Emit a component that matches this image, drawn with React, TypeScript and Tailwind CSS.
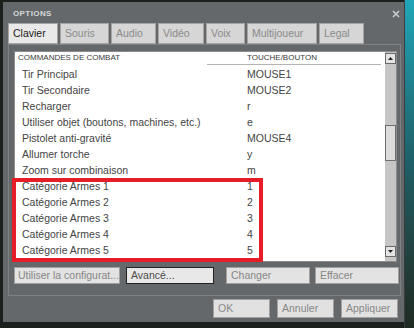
import React from 'react';

const tabs = [
  { label: 'Clavier', w: 'w-[50px]', active: true },
  { label: 'Souris', w: 'w-[49px]' },
  { label: 'Audio', w: 'w-[45px]' },
  { label: 'Vidéo', w: 'w-[46px]' },
  { label: 'Voix', w: 'w-[39px]' },
  { label: 'Multijoueur', w: 'w-[70px]' },
  { label: 'Legal', w: 'w-[45px]' },
];

const bindings: [string, string][] = [
  ['Tir Principal', 'MOUSE1'],
  ['Tir Secondaire', 'MOUSE2'],
  ['Recharger', 'r'],
  ['Utiliser objet (boutons, machines, etc.)', 'e'],
  ['Pistolet anti-gravité', 'MOUSE4'],
  ['Allumer torche', 'y'],
  ['Zoom sur combinaison', 'm'],
  ['Catégorie Armes 1', '1'],
  ['Catégorie Armes 2', '2'],
  ['Catégorie Armes 3', '3'],
  ['Catégorie Armes 4', '4'],
  ['Catégorie Armes 5', '5'],
];

function ScrollArrow({ up }: { up?: boolean }) {
  return (
    <div className="h-[11px] w-[11px] bg-[#e4e4e4] border border-[#6a6a6a] flex items-center justify-center">
      <svg width="5" height="3" viewBox="0 0 5 3">
        {up ? <polygon points="0,3 5,3 2.5,0" fill="#222" /> : <polygon points="0,0 5,0 2.5,3" fill="#222" />}
      </svg>
    </div>
  );
}

export default function App() {
  return (
    <div className="w-[414px] h-[328px] bg-[#1b201c] flex overflow-hidden font-['Liberation_Sans',Arial,sans-serif] text-[10.5px]">
      <div className="ml-[3px] mt-[2px] w-[401px] h-[320px] bg-[#65686a] flex flex-col">
        {/* Title */}
        <div className="h-[21px] flex items-center justify-between pl-[10px] pr-[4px] pt-[3px]">
          <span className="text-[8px] font-bold tracking-[0.4px] text-[#d6d8da]">OPTIONS</span>
          <svg width="8" height="8" viewBox="0 0 8 8">
            <path d="M1 1 L7 7 M7 1 L1 7" stroke="#c9cbcd" strokeWidth="1.6" />
          </svg>
        </div>

        {/* Tabs */}
        <div className="h-[21px] ml-[5px] flex gap-[2px]">
          {tabs.map((t) => (
            <div
              key={t.label}
              className={`${t.w} h-full flex items-center pl-[4px] border border-[#a4a4a4] ${
                t.active ? 'bg-[#e9e9e9] text-[#1a1a1a]' : 'bg-[#d6d6d6] text-[#8a8a8a]'
              }`}
            >
              {t.label}
            </div>
          ))}
        </div>

        {/* Panel */}
        <div className="ml-[5px] w-[393px] border border-[#7e8183] pl-[5px] pr-[1px] pt-[6px] pb-[11px] flex flex-col">
          <div className="relative w-[383px] h-[211px] bg-white border border-[#8c8c8c] flex">
            <div className="flex-1 flex flex-col">
              <div className="h-[12px] flex items-center text-[8px] text-[#3a3a3a]">
                <span className="pl-[3px] w-[232px]">COMMANDES DE COMBAT</span>
                <span>TOUCHE/BOUTON</span>
              </div>
              <div className="h-px ml-[192px] mr-[4px] bg-[#b4b4b4]" />
              <div className="mt-[2px] flex flex-col">
                {bindings.map(([label, key]) => (
                  <div key={label} className="h-[16px] flex items-center text-[#444]">
                    <span className="pl-[7px] w-[232px]">{label}</span>
                    <span>{key}</span>
                  </div>
                ))}
              </div>
            </div>
            <div className="w-[11px] bg-[#c6c6c6] flex flex-col pt-[1px] pb-[4px]">
              <ScrollArrow up />
              <div className="mt-[61px] h-[36px] bg-[#dcdcdc] border border-[#6e6e6e]" />
              <div className="flex-1" />
              <ScrollArrow />
            </div>
            <div className="absolute left-[-3px] top-[126px] w-[251px] h-[84px] border-[4px] border-[#e51d26]" />
          </div>

          <div className="mt-[5px] h-[17px] flex">
            <div className="w-[106px] bg-[#e3e3e3] border border-[#a0a0a0] text-[#868686] flex items-center pl-[3px]">
              Utiliser la configurat...
            </div>
            <div className="ml-[6px] w-[88px] bg-[#e8e8e8] border border-[#222] text-[#4a4a4a] flex items-center pl-[4px]">
              Avancé...
            </div>
            <div className="ml-[12px] w-[84px] bg-[#e3e3e3] border border-[#a0a0a0] text-[#868686] flex items-center pl-[4px]">
              Changer
            </div>
            <div className="ml-[5px] w-[84px] bg-[#e3e3e3] border border-[#a0a0a0] text-[#868686] flex items-center pl-[4px]">
              Effacer
            </div>
          </div>
        </div>

        {/* Bottom buttons */}
        <div className="mt-[3px] h-[19px] flex justify-end gap-[7px] pr-[6px]">
          {['OK', 'Annuler', 'Appliquer'].map((b) => (
            <div key={b} className="w-[57px] bg-[#e1e1e1] border border-[#a0a0a0] text-[#888] flex items-center pl-[4px]">
              {b}
            </div>
          ))}
        </div>
      </div>
      <div className="flex-1 bg-gradient-to-b from-[#1fa6b8] via-[#1e5f66] to-[#1f2a22] border-l border-[#3a3d3f]" />
    </div>
  );
}
